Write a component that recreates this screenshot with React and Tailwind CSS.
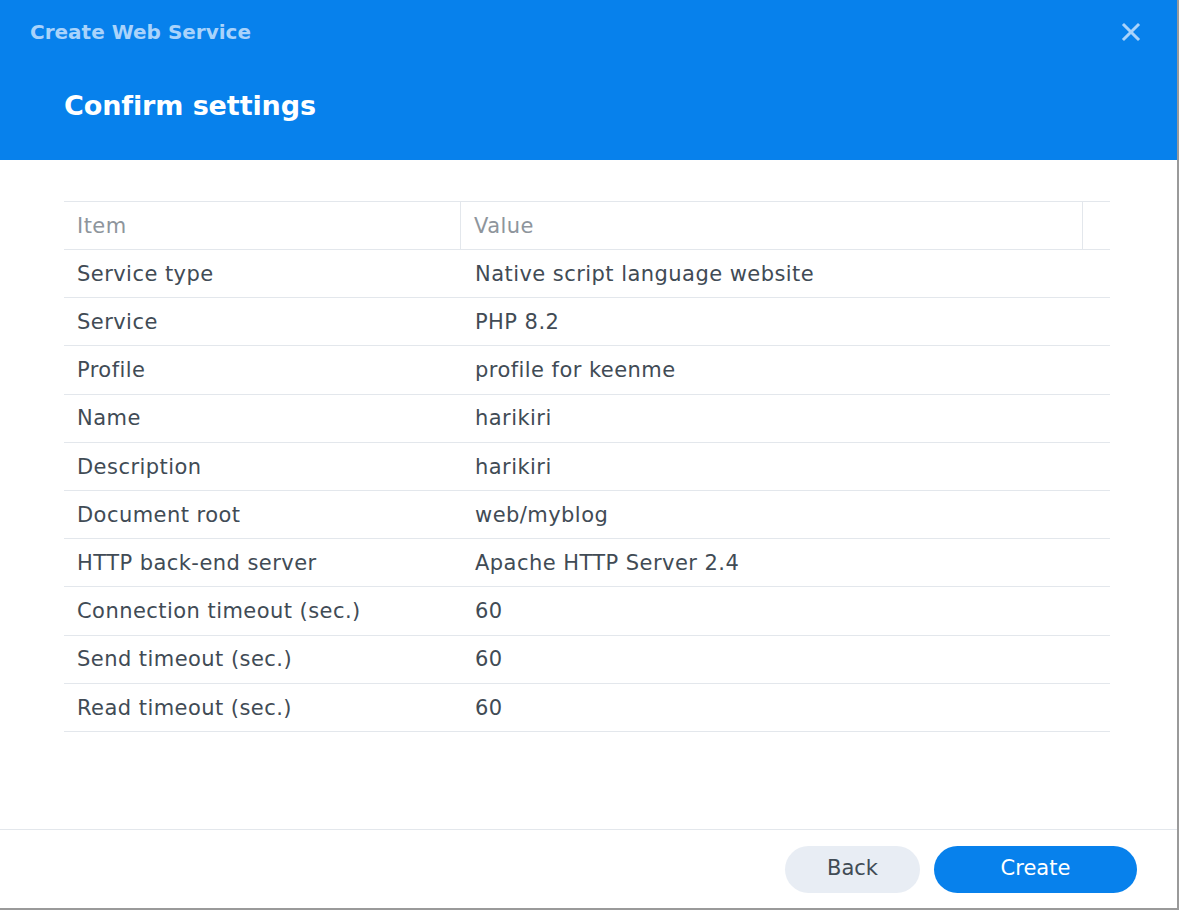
const rows = [
  ['Service type', 'Native script language website'],
  ['Service', 'PHP 8.2'],
  ['Profile', 'profile for keenme'],
  ['Name', 'harikiri'],
  ['Description', 'harikiri'],
  ['Document root', 'web/myblog'],
  ['HTTP back-end server', 'Apache HTTP Server 2.4'],
  ['Connection timeout (sec.)', '60'],
  ['Send timeout (sec.)', '60'],
  ['Read timeout (sec.)', '60'],
];

export default function App() {
  return (
    <div
      className="w-[1179px] h-[910px] bg-white flex flex-col border-r-2 border-b-2 border-[#9a9a9a] text-[#414b55]"
      style={{ fontFamily: 'Verdana, "DejaVu Sans", sans-serif' }}
    >
      <div className="h-[160px] bg-[#0781ec] flex flex-col shrink-0">
        <div className="flex items-center justify-between pl-[30px] pr-[36px] h-[64px]">
          <span className="text-[#a9d3fb] font-bold text-[20px]">Create Web Service</span>
          <svg width="20" height="20" viewBox="0 0 20 20" className="text-[#a9d3fb]">
            <path d="M3 3L17 17M17 3L3 17" stroke="currentColor" strokeWidth="3" strokeLinecap="square" />
          </svg>
        </div>
        <div className="pl-[64px] pt-[22px] text-white font-bold text-[27px] tracking-[-0.1px]">Confirm settings</div>
      </div>

      <div className="flex-1 px-[64px] pt-[41px] pr-[67px]">
        <div className="border-t border-[#e3e7ec] text-[21px] tracking-[0.45px]">
          <div className="flex h-[48px] border-b border-[#e3e7ec] text-[#8e959c]">
            <div className="w-[397px] px-[13px] pt-[2px] flex items-center border-r border-[#e3e7ec]">Item</div>
            <div className="flex-1 px-[13px] pt-[2px] flex items-center border-r border-[#e3e7ec]">Value</div>
            <div className="w-[27px]" />
          </div>
          {rows.map(([k, v]) => (
            <div key={k} className="flex h-[48.2px] border-b border-[#e3e7ec]">
              <div className="w-[398px] px-[13px] pt-[2px] flex items-center">{k}</div>
              <div className="flex-1 px-[13px] pt-[2px] flex items-center">{v}</div>
            </div>
          ))}
        </div>
      </div>

      <div className="h-[79px] border-t border-[#e3e7ec] flex items-center justify-end gap-[14px] pr-[40px] shrink-0">
        <button className="w-[135px] h-[47px] rounded-full bg-[#e8edf4] text-[#414b55] text-[21px]">Back</button>
        <button className="w-[203px] h-[47px] rounded-full bg-[#0781ec] text-white text-[21px]">Create</button>
      </div>
    </div>
  );
}
